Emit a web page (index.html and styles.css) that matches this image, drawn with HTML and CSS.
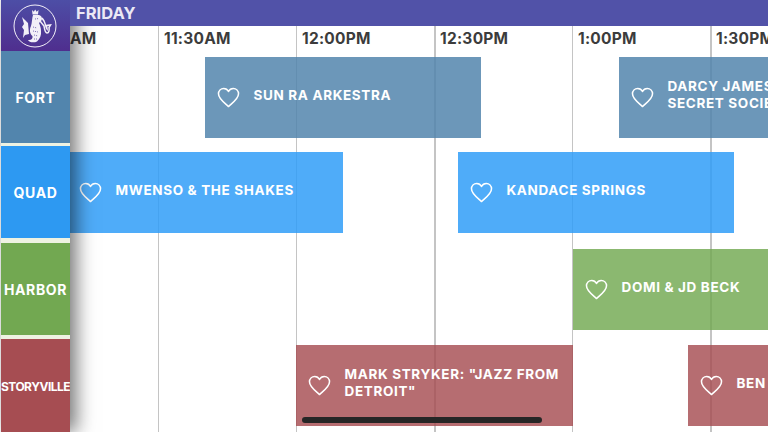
FILE: index.html
```html
<!DOCTYPE html>
<html lang="en">
<head>
<meta charset="utf-8">
<title>Friday schedule</title>
<link rel="stylesheet" href="styles.css">
</head>
<body>
<svg class="sprite" width="0" height="0" aria-hidden="true">
  <symbol id="heart" viewBox="0 0 24 22">
    <path d="M12 20.5 C8 16.8 1.5 12.6 1.5 7.2 C1.5 3.8 4 1.5 7 1.5 C9.2 1.5 11 2.7 12 4.7 C13 2.7 14.8 1.5 17 1.5 C20 1.5 22.5 3.8 22.5 7.2 C22.5 12.6 16 16.8 12 20.5 Z" fill="none" stroke="#fff" stroke-width="1.6" stroke-linejoin="round"/>
  </symbol>
</svg>
<div class="app">
  <aside class="rail">
    <div class="logo">
      <svg width="44" height="44" viewBox="0 0 44 44">
        <circle cx="22" cy="22" r="21" fill="none" stroke="#f2eff8" stroke-width="1"/>
        <path d="M9 13 L12 16 L15 19 L16 30 L12 31 L10 34 L11 26 L9 23 L11 20 Z" fill="#f2eff8"/>
        <path d="M19.5 10.5 L19 6 L20.8 7.8 L22.2 5.5 L23.6 7.8 L25.5 6 L25 10.5 Z" fill="#f2eff8"/>
        <path d="M20 11 L26 11 C29 12 30 15 28 17 L26 19 C27 21 28 24 28 27 C28.500 31 27 35 24 37.500 C21 39 16 38.500 15 36 C18 36.500 20 35 19.500 32 C17 30 16 26 18 22 C19 19 19 14 20 11 Z" fill="#f2eff8"/>
        <path d="M27 17 L31 22 C31.500 25 32 29 34 29 C36 29 36.500 26 36 23.500 L37.500 21 L33.500 21.500 L34 25 C33 24 32.500 20 31 17 L29 14" fill="none" stroke="#f2eff8" stroke-width="1.500"/>
        <path d="M20 23 L24 24 M20 27 L25 28 M21 31 L25 32 M21 35 L24 35 M22 15 L26 14.500" stroke="#5a4ba3" stroke-width=".8" stroke-dasharray="1 1" fill="none"/>
      </svg>
    </div>
    <div class="stage stage-fort">FORT</div>
    <div class="stage stage-quad">QUAD</div>
    <div class="stage stage-harbor">HARBOR</div>
    <div class="stage stage-story">STORYVILLE</div>
  </aside>
  <main class="board">
    <header class="day">FRIDAY</header>
    <div class="times">
      <span class="time time-first">AM</span>
      <span class="time">11:30AM</span>
      <span class="time">12:00PM</span>
      <span class="time">12:30PM</span>
      <span class="time">1:00PM</span>
      <span class="time">1:30PM</span>
    </div>
    <div class="rows">
      <div class="row">
        <article class="event event-fort" style="left:135px;width:276px"><svg class="heart"><use href="#heart"/></svg><span class="name">SUN RA ARKESTRA</span></article>
        <article class="event event-fort" style="left:549px;width:276px"><svg class="heart"><use href="#heart"/></svg><span class="name">DARCY JAMES ARGUE'S<br>SECRET SOCIETY</span></article>
      </div>
      <div class="row row-quad">
        <article class="event event-quad" style="left:-69px;width:342px"><span class="lead"></span><svg class="heart"><use href="#heart"/></svg><span class="name">MWENSO &amp; THE SHAKES</span></article>
        <article class="event event-quad" style="left:388px;width:276px"><svg class="heart"><use href="#heart"/></svg><span class="name">KANDACE SPRINGS</span></article>
      </div>
      <div class="row row-harbor">
        <article class="event event-harbor" style="left:503px;width:276px"><svg class="heart"><use href="#heart"/></svg><span class="name">DOMI &amp; JD BECK</span></article>
      </div>
      <div class="row">
        <article class="event event-story" style="left:226px;width:277px"><svg class="heart"><use href="#heart"/></svg><span class="name">MARK STRYKER: "JAZZ FROM<br>DETROIT"</span></article>
        <article class="event event-story" style="left:618px;width:276px"><svg class="heart"><use href="#heart"/></svg><span class="name">BEN</span></article>
      </div>
    </div>
  </main>
</div>
<div class="home-bar"></div>
</body>
</html>
```
FILE: styles.css
```css
* { box-sizing: border-box; }
html, body { margin: 0; height: 100%; overflow: hidden; background: #fff; }
body { font-family: Inter, "Liberation Sans", sans-serif; color: #fff; }
.sprite { position: absolute; }

.app { display: flex; width: 768px; height: 432px; overflow: hidden; position: relative; }

.rail {
  position: relative;
  z-index: 2;
  flex: 0 0 69px;
  min-width: 0;
  margin-left: 1px;
  display: flex;
  flex-direction: column;
  background: #eef2e2;
  box-shadow: 6px 0 18px rgba(0, 0, 0, .55);
}
.logo {
  height: 51px;
  padding-right: 1px;
  display: flex;
  align-items: center;
  justify-content: center;
  background: linear-gradient(#4d4ea6, #4f2e8e);
}
.stage {
  height: 92px;
  padding-top: 1px;
  display: flex;
  align-items: center;
  justify-content: center;
  font-size: 14px;
  font-weight: 700;
  letter-spacing: .65px;
  white-space: nowrap;
  overflow: hidden;
}
.stage-fort { background: #5285ad; margin-bottom: 3px; }
.stage-quad { background: #2d99f2; margin-bottom: 5px; }
.stage-harbor { background: #72a851; margin-bottom: 4px; }
.stage-story { background: #a64d52; height: 93px; font-size: 12px; letter-spacing: -.5px; }

.board { flex: 1; min-width: 0; position: relative; }
.board::before {
  content: "";
  position: absolute;
  top: 26px;
  bottom: 0;
  left: 88px;
  width: 700px;
  background-image: repeating-linear-gradient(90deg, #c4c4c4 0 1.5px, transparent 1.5px 138px);
}
.day {
  position: relative;
  z-index: 3;
  height: 26px;
  padding-left: 6px;
  background: #5152a8;
  color: #ebe9f5;
  font-size: 16.5px;
  font-weight: 700;
  line-height: 26px;
}
.times {
  display: grid;
  grid-template-columns: 88px repeat(5, 138px);
  height: 31px;
}
.time {
  padding-left: 6px;
  color: #3c3c3c;
  font-size: 15.5px;
  font-weight: 700;
  letter-spacing: .25px;
  line-height: 25px;
  white-space: nowrap;
}
.time-first { padding: 0 64px 0 0; text-align: right; }

.rows {
  position: relative;
  display: flex;
  flex-direction: column;
  gap: 15.5px;
  height: 375px;
}
.row { position: relative; height: 80.5px; }
.row-quad { margin-top: -1px; }
.row-harbor { margin-top: 1px; }

.event {
  position: absolute;
  top: 0;
  bottom: 0;
  display: flex;
  align-items: center;
  gap: 14px;
  padding-left: 11.5px;
  font-size: 13.5px;
  font-weight: 700;
  line-height: 17px;
  letter-spacing: .65px;
  white-space: nowrap;
  overflow: hidden;
}
.event-fort { background: rgba(82, 133, 173, .85); }
.event-quad { background: rgba(48, 158, 248, .85); }
.event-harbor { background: rgba(114, 168, 81, .82); }
.event-story { background: rgba(166, 77, 82, .82); }
.lead { flex: 0 0 66px; margin-right: -14px; }
.heart { flex: 0 0 23px; width: 23px; height: 21px; }
.name { display: block; padding-bottom: 4px; }

.home-bar {
  position: absolute;
  left: 302px;
  top: 417px;
  width: 240px;
  height: 6px;
  border-radius: 3px;
  background: #262626;
}
```
